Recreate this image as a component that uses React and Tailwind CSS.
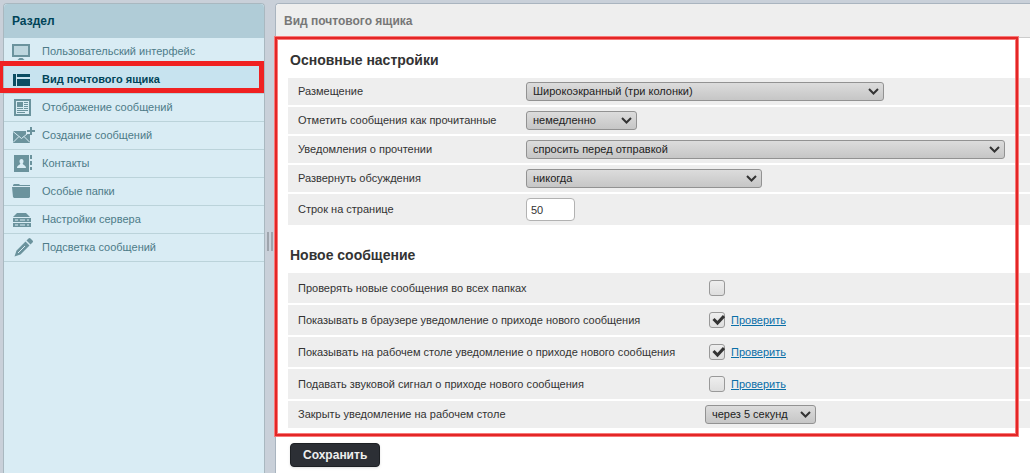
const sections = [
  { id: "interface", label: "Пользовательский интерфейс", Icon: MonitorIcon },
  { id: "mailbox", label: "Вид почтового ящика", Icon: LayoutIcon, active: true },
  { id: "display", label: "Отображение сообщений", Icon: NewsIcon },
  { id: "compose", label: "Создание сообщений", Icon: MailPlusIcon },
  { id: "contacts", label: "Контакты", Icon: ContactsIcon },
  { id: "folders", label: "Особые папки", Icon: FolderIcon },
  { id: "server", label: "Настройки сервера", Icon: ServerIcon },
  { id: "highlight", label: "Подсветка сообщений", Icon: PencilIcon },
];

function MonitorIcon() {
  return (
    <svg width="24" height="20" viewBox="0 0 24 20" fill="currentColor" aria-hidden="true">
      <path fillRule="evenodd" d="M0 2h18v13H0zM2 4v9h14V4z" />
      <path d="M2 4h14v9H2z" opacity=".25" />
      <path d="M7.500 16h3l2 2h-7z" />
    </svg>
  );
}

function LayoutIcon() {
  return (
    <svg width="24" height="20" viewBox="0 0 24 20" fill="currentColor" aria-hidden="true">
      <path d="M1 4h3v12H1zM5 4h13v3H5zM5 9h13v7H5z" />
    </svg>
  );
}

function NewsIcon() {
  return (
    <svg width="24" height="20" viewBox="0 0 24 20" fill="currentColor" aria-hidden="true">
      <path fillRule="evenodd" d="M2 1h17v17H2zM4 3v13h13V3z" />
      <path d="M5 4h6v5H5zM12 4h4v1h-4zM12 6h4v1h-4zM12 8h4v1h-4zM5 10h6v1H5zM12 10h4v1h-4zM5 12h11v1H5zM5 14h8v1H5z" />
    </svg>
  );
}

function MailPlusIcon() {
  return (
    <svg width="24" height="20" viewBox="0 0 24 20" fill="currentColor" aria-hidden="true">
      <path d="M1 5h13v3h4v9H1z" />
      <path d="M1 5.500l8.500 7L18 5.500M1 16.500l6-6M18 16.500l-6-6" stroke="#d9ecf4" fill="none" />
      <path d="M18 1h2v3h3v2h-3v3h-2V6h-3V4h3z" />
    </svg>
  );
}

function ContactsIcon() {
  return (
    <svg width="24" height="20" viewBox="0 0 24 20" fill="currentColor" aria-hidden="true">
      <path d="M2 1h15v17H2zM18 1h2v4h-2zM18 7h2v4h-2zM18 13h2v3h-2z" />
      <path
        d="M9.500 5c1.500 0 2 1 2 2.500 0 1-.5 1.500-.8 2 0 1.500 3.300 1.500 3.300 4.500H5c0-3 3.300-3 3.300-4.500-.3-.5-.8-1-.8-2C7.500 6 8 5 9.500 5z"
        fill="#d9ecf4"
      />
    </svg>
  );
}

function FolderIcon() {
  return (
    <svg width="24" height="20" viewBox="0 0 24 20" fill="currentColor" aria-hidden="true">
      <path d="M1 4V3l1-1h5l1 1h10v1zM0 5h18v10l-1 1H2l-1-1z" />
    </svg>
  );
}

function ServerIcon() {
  return (
    <svg width="24" height="20" viewBox="0 0 24 20" fill="currentColor" aria-hidden="true">
      <path d="M5 3h9l4 4H1zM1 8h18v4H1zM1 13h18v4H1z" />
      <path d="M3 10h3M8 10h5M3 15h3M8 15h5M15 10h2M15 15h2" stroke="#d9ecf4" />
    </svg>
  );
}

function PencilIcon() {
  return (
    <svg width="24" height="20" viewBox="0 0 24 20" fill="currentColor" aria-hidden="true">
      <path d="M2.500 18.500l2-6 9-9 4 4-9 9zM14.500 2.500l2-2q1-1 2 0l2 2q1 1 0 2l-2 2z" />
      <path d="M6 15l7-7" stroke="#d9ecf4" strokeWidth="1" />
    </svg>
  );
}

function Select({ id, value, className }) {
  return (
    <div className={`relative max-w-full ${className}`}>
      <select
        id={id}
        className="block h-[19px] w-full appearance-none rounded-[3px] border border-[#929292] bg-linear-to-b from-[#dcdcdc] to-[#c6c6c6] pr-6 pb-px pl-1.5 text-[#222]"
      >
        <option>{value}</option>
      </select>
      <svg
        className="pointer-events-none absolute top-1.5 right-[5px]"
        width="11"
        height="7"
        viewBox="0 0 11 7"
        fill="none"
        stroke="#333"
        strokeWidth="2"
        aria-hidden="true"
      >
        <path d="M1 1l4.500 4.500L10 1" />
      </svg>
    </div>
  );
}

function Checkbox({ id, checked }) {
  return (
    <span className="relative block size-4">
      <input
        id={id}
        type="checkbox"
        defaultChecked={checked}
        className="peer block size-4 appearance-none rounded-[3px] border border-[#999] bg-linear-to-b from-[#eee] to-[#dedede]"
      />
      <svg
        className="pointer-events-none absolute inset-0 hidden peer-checked:block"
        width="16"
        height="16"
        viewBox="0 0 16 16"
        fill="none"
        stroke="#333"
        strokeWidth="3"
        aria-hidden="true"
      >
        <path d="M4.500 7l4 4L15 4" />
      </svg>
    </span>
  );
}

function Row({ id, label, labelWidth, cell = "h-[29px]", children }) {
  return (
    <tr>
      <th scope="row" className={`border-b-2 border-white bg-[#eee] pl-2.5 text-left font-normal ${labelWidth} ${cell}`}>
        <label htmlFor={id} className="block">
          {label}
        </label>
      </th>
      <td className="border-b-2 border-white bg-[#eee]">{children}</td>
    </tr>
  );
}

function CheckRow({ id, label, checked, link }) {
  return (
    <Row id={id} label={label} labelWidth="w-[417px]" cell="h-8">
      <div className="flex items-center gap-1.5 pl-1">
        <Checkbox id={id} checked={checked} />
        {link && (
          <a href="#test" className="text-[#0a6fa8] underline">
            Проверить
          </a>
        )}
      </div>
    </Row>
  );
}

function Sidebar() {
  return (
    <aside className="w-[262px] shrink-0 rounded-t border border-b-0 border-[#a9b8c0] bg-[#d9ecf4]">
      <h2 className="flex h-[34px] items-center rounded-t bg-[#b0ccd7] pl-2 text-xs font-bold text-[#004458]">
        Раздел
      </h2>
      <nav>
        <ul>
          {sections.map(({ id, label, Icon, active }) => (
            <li key={id} className="relative border-b border-[#bbd3da]">
              <a
                href={`#${id}`}
                className={`flex h-[27px] items-center gap-1.5 pl-2 ${
                  active ? "bg-[#c7e3ef] font-bold text-[#004458]" : "text-[#4d7b88]"
                }`}
              >
                <span className={active ? "text-[#0b4d62]" : "text-[#6b939d]"}>
                  <Icon />
                </span>
                {label}
              </a>
              {active && (
                <span className="pointer-events-none absolute -top-[5px] right-0 bottom-0 -left-[6px] border-5 border-[#f02121]" />
              )}
            </li>
          ))}
        </ul>
      </nav>
    </aside>
  );
}

export default function App() {
  return (
    <div className="flex min-h-screen overflow-hidden bg-[#c9d0d9] pt-[3px] pl-[3px] font-['Liberation_Sans',Arial,sans-serif] text-[11px] leading-[15px] text-[#333]">
      <Sidebar />
      <div className="flex w-2.5 shrink-0 items-center justify-center gap-0.5 pt-1.5">
        <span className="h-[19px] w-0.5 bg-[#9ea4ac]" />
        <span className="h-[19px] w-0.5 bg-[#9ea4ac]" />
      </div>
      <main className="min-w-0 flex-1 rounded-tl border-t border-l border-[#a9b4bf] bg-white">
        <h1 className="flex h-[34px] items-center rounded-tl border-b border-[#ccc] bg-[#eee] pl-2 text-xs font-bold text-[#777]">
          Вид почтового ящика
        </h1>
        <form>
          <div className="relative pt-3 pb-[7px] pl-3">
            <h2 className="mb-2 pl-0.5 text-sm leading-5 font-bold">Основные настройки</h2>
            <table className="w-full border-separate border-spacing-0">
              <tbody>
                <Row id="layout" label="Размещение" labelWidth="w-[238px]">
                  <Select id="layout" value="Широкоэкранный (три колонки)" className="w-[358px]" />
                </Row>
                <Row id="mark-read" label="Отметить сообщения как прочитанные" labelWidth="w-[238px]">
                  <Select id="mark-read" value="немедленно" className="w-[111px]" />
                </Row>
                <Row id="receipts" label="Уведомления о прочтении" labelWidth="w-[238px]">
                  <Select id="receipts" value="спросить перед отправкой" className="w-[479px]" />
                </Row>
                <Row id="threads" label="Развернуть обсуждения" labelWidth="w-[238px]">
                  <Select id="threads" value="никогда" className="w-[236px]" />
                </Row>
                <Row id="page-size" label="Строк на странице" labelWidth="w-[238px]" cell="h-[33px]">
                  <input
                    id="page-size"
                    type="text"
                    defaultValue="50"
                    className="block h-[23px] w-[49px] rounded border border-[#b2b2b2] bg-white px-1"
                  />
                </Row>
              </tbody>
            </table>
            <h2 className="mt-[18px] mb-2 pl-0.5 text-sm leading-5 font-bold">Новое сообщение</h2>
            <table className="w-full border-separate border-spacing-0">
              <tbody>
                <CheckRow id="check-all" label="Проверять новые сообщения во всех папках" />
                <CheckRow
                  id="notify-browser"
                  label="Показывать в браузере уведомление о приходе нового сообщения"
                  checked
                  link
                />
                <CheckRow
                  id="notify-desktop"
                  label="Показывать на рабочем столе уведомление о приходе нового сообщения"
                  checked
                  link
                />
                <CheckRow id="notify-sound" label="Подавать звуковой сигнал о приходе нового сообщения" link />
                <Row id="close-after" label="Закрыть уведомление на рабочем столе" labelWidth="w-[417px]">
                  <Select id="close-after" value="через 5 секунд" className="w-[111px]" />
                </Row>
              </tbody>
            </table>
            <div className="pointer-events-none absolute -top-0.5 right-[11px] bottom-0 -left-0.5 border-4 border-[#f77a7a]" />
            <div className="pointer-events-none absolute -top-px right-3 bottom-px -left-px border-2 border-[#e32626]" />
          </div>
          <button
            type="submit"
            className="mt-1.5 ml-3.5 h-6 rounded border border-[#1d2024] bg-[#2c2f35] px-3 text-xs font-bold text-[#eee] shadow-sm"
          >
            Сохранить
          </button>
        </form>
      </main>
    </div>
  );
}
